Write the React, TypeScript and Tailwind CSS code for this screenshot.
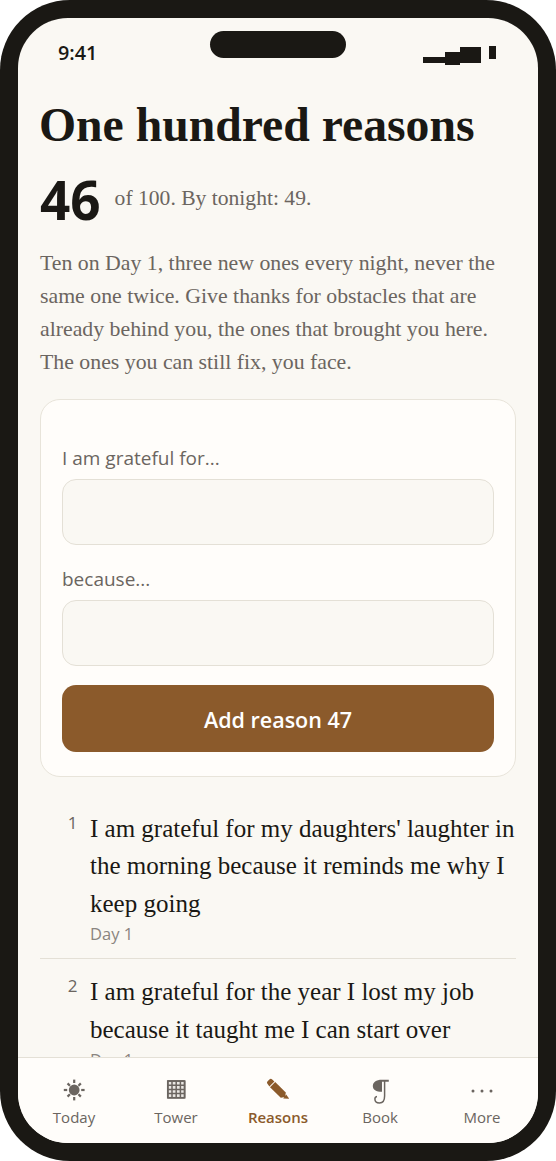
const SERIF = "font-['Liberation_Serif',serif]";

function Sun() {
  const rays = [0, 45, 90, 135, 180, 225, 270, 315];
  return (
    <svg width="36" height="36" viewBox="0 0 36 36" fill="#6b6560">
      <circle cx="18.2" cy="18" r="5.4" />
      {rays.map((r) => (
        <rect key={r} x="17.1" y={r % 90 === 0 ? 7.6 : 8.6} width="2.2" height="3.4" transform={`rotate(${r} 18.2 18)`} />
      ))}
    </svg>
  );
}

function Grid() {
  const lines = [9.8, 14, 18.2, 22.4, 26.6];
  return (
    <svg width="36" height="36" viewBox="0 0 36 36" fill="none" stroke="#6b6560">
      <rect x="9.8" y="9" width="16.8" height="16.8" strokeWidth="1.7" fill="#b9b5ae" fillOpacity="0.3" />
      {lines.map((l) => (
        <path key={l} d={`M${l} 9V25.8M9.8 ${l - 0.8}H26.6`} strokeWidth="1.5" />
      ))}
    </svg>
  );
}

function Pencil() {
  return (
    <svg width="36" height="36" viewBox="0 0 36 36" fill="#8b5a2b">
      <path d="M7.6 9.2 9.4 7.4C10.3 6.6 11.3 6.6 12.2 7.4L14.4 9.4 9.4 14.4 7.6 12C6.8 11.1 6.8 10.1 7.6 9.2Z" />
      <path d="M15.2 10 25.8 20.6 25.2 25 20.8 25.8 10 15.2Z" />
      <path d="M26.2 22.4 29.2 26.8 23.2 26.4Z" />
    </svg>
  );
}

function Curl() {
  return (
    <svg width="36" height="36" viewBox="0 0 36 36" fill="none">
      <path d="M20 7.8C14 7.8 10.8 10.4 10.8 14 10.8 17.6 14 19.8 20 19.8Z" fill="#6b6560" />
      <path d="M20 7.8H26.8V9.8H20Z" fill="#6b6560" />
      <path d="M22.6 8.5V24C22.6 28.8 20.2 31 17.5 31 14.6 31 12.9 29.2 12.9 27 12.9 25.6 13.8 24.6 15 24.4" stroke="#6b6560" strokeWidth="1.5" />
    </svg>
  );
}

function Dots() {
  return (
    <svg width="36" height="36" viewBox="0 0 36 36" fill="#6b6560">
      <circle cx="9" cy="19" r="1.5" />
      <circle cx="18" cy="19" r="1.5" />
      <circle cx="27" cy="19" r="1.5" />
    </svg>
  );
}

function Tab({ icon, label, active }: { icon: React.ReactNode; label: string; active?: boolean }) {
  return (
    <div className="flex flex-col items-center">
      <div className="flex h-[28px] w-full items-center justify-center">{icon}</div>
      <div className={active ? "mt-[3px] text-[15px] font-semibold leading-[21px] text-[#8b5a2b]" : "mt-[3px] text-[15px] leading-[21px] text-[#6b6560]"}>
        {label}
      </div>
    </div>
  );
}

function Reason({ n, lines, divider }: { n: number; lines: string[]; divider?: boolean }) {
  return (
    <div className={divider ? "flex border-b border-[#e4e0d6] pb-[12px] pt-[10px]" : "flex pt-[14px]"}>
      <div className="w-[37.5px] shrink-0 pt-[2px] text-right text-[17px] leading-[22px] text-[#6b6560]">{n}</div>
      <div className="ml-[12.5px]">
        <div className={`${SERIF} text-[25px] leading-[37.4px] text-[#1a1814]`}>
          {lines.map((l) => (
            <div key={l} className="whitespace-nowrap">{l}</div>
          ))}
        </div>
        <div className="text-[16.5px] leading-[24px] text-[#8a857f]">Day 1</div>
      </div>
    </div>
  );
}

export default function App() {
  return (
    <div className="relative h-[1161px] w-[556px] rounded-[70px] bg-[#1a1814] p-[18px] font-['Open_Sans',sans-serif]">
      <div className="relative flex h-full flex-col overflow-hidden rounded-[50px] bg-[#faf8f3]">
        <div className="absolute left-[192px] top-[13px] h-[27px] w-[136px] rounded-[14px] bg-[#1a1814]" />

        <div className="flex h-[54px] shrink-0 items-start justify-between pl-[40px] pr-[41px] pt-[22px]">
          <span className="text-[19.8px] font-[550] leading-[26px] text-[#1a1814]">9:41</span>
          <svg width="74" height="20" viewBox="0 0 74 20" className="mt-[6px]" fill="#1a1814">
            <rect x="0" y="11" width="22" height="6" />
            <rect x="22" y="6" width="15" height="13" />
            <rect x="37" y="1" width="21" height="16" />
            <rect x="66" y="0" width="7" height="13" />
          </svg>
        </div>

        <div className="flex-1 overflow-hidden px-[22px]">
          <h1 className={`${SERIF} -ml-[1px] mt-[23px] whitespace-nowrap text-[47.7px] font-bold leading-[60px] text-[#1a1814]`}>One hundred reasons</h1>
          <div className="mt-[14px] flex items-start">
            <span className="text-[53px] font-bold leading-[62px] text-[#1a1814]">46</span>
            <span className={`${SERIF} ml-[14px] mt-[14px] text-[21.6px] leading-[30px] text-[#6b6560]`}>of 100. By tonight: 49.</span>
          </div>
          <div className={`${SERIF} mt-[16px] text-[21.8px] leading-[33px] text-[#6b6560]`}>
            <div className="whitespace-nowrap">Ten on Day 1, three new ones every night, never the</div>
            <div className="whitespace-nowrap">same one twice. Give thanks for obstacles that are</div>
            <div className="whitespace-nowrap">already behind you, the ones that brought you here.</div>
            <div className="whitespace-nowrap">The ones you can still fix, you face.</div>
          </div>

          <div className="mt-[20px] rounded-[20px] border border-[#e8e4da] bg-[#fffdfa] px-[21px] pb-[24px] pt-[44px]">
            <div className="text-[19px] leading-[28px] text-[#6b6560]">I am grateful for...</div>
            <div className="mt-[7px] h-[66px] rounded-[14px] border border-[#e4e0d6] bg-[#faf8f3]" />
            <div className="mt-[20px] text-[19px] leading-[28px] text-[#6b6560]">because...</div>
            <div className="mt-[7px] h-[66px] rounded-[14px] border border-[#e4e0d6] bg-[#faf8f3]" />
            <div className="mt-[19px] flex h-[67px] items-center justify-center rounded-[14px] bg-[#8b5a2b] pt-[3px] text-[21.5px] font-semibold text-white">
              Add reason 47
            </div>
          </div>

          <div className="mt-[23px]">
            <Reason divider n={1} lines={["I am grateful for my daughters' laughter in", "the morning because it reminds me why I", "keep going"]} />
            <Reason n={2} lines={["I am grateful for the year I lost my job", "because it taught me I can start over"]} />
          </div>
        </div>

        <div className="grid h-[86px] shrink-0 grid-cols-5 border-t border-[#e4e0d6] bg-[#fffdfa] px-[5px] pt-[18px]">
          <Tab icon={<Sun />} label="Today" />
          <Tab icon={<Grid />} label="Tower" />
          <Tab active icon={<Pencil />} label="Reasons" />
          <Tab icon={<Curl />} label="Book" />
          <Tab icon={<Dots />} label="More" />
        </div>
      </div>
    </div>
  );
}
